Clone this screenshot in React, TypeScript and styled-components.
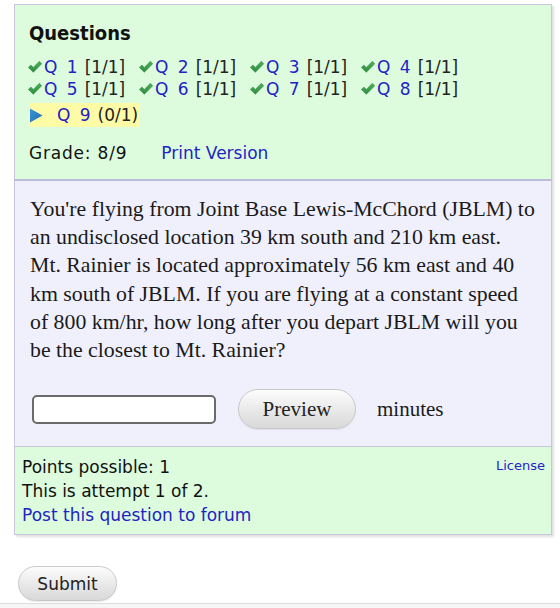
import React from "react";
import styled, { createGlobalStyle } from "styled-components";

const GlobalStyle = createGlobalStyle`
  html, body { margin: 0; padding: 0; background: #ffffff; }
  body { font-family: "DejaVu Sans", Verdana, sans-serif; color: #111; }
`;

const Page = styled.div`
  width: 560px;
  height: 608px;
  display: flex;
  flex-direction: column;
  overflow: hidden;
`;

const Frame = styled.div`
  margin: 4px 8px 0 14px;
  display: flex;
  flex-direction: column;
  box-shadow: 2px 2px 2px rgba(0, 0, 0, 0.12);
`;

const NavPanel = styled.div`
  background: #ddfcdd;
  border: 1px solid #c6c6de;
  border-bottom: 2px solid #bcbcd6;
  padding: 16px 14px 15px 14px;
`;

const Heading = styled.h3`
  margin: 0 0 11px 0;
  font-family: "DejaVu Sans Condensed", "DejaVu Sans", Verdana, sans-serif;
  font-stretch: condensed;
  font-size: 20px;
  line-height: 24px;
  font-weight: bold;
  color: #111;
`;

const QuestionGrid = styled.div`
  display: flex;
  flex-direction: column;
`;

const QuestionRow = styled.div`
  display: flex;
  align-items: center;
  height: 22px;
  font-size: 17px;
`;

const QuestionItem = styled.span<{ $current?: boolean }>`
  display: inline-flex;
  align-items: center;
  width: 111px;
  white-space: nowrap;
  ${(p) =>
    p.$current &&
    `
    width: auto;
    background: #fdfba6;
    height: 24px;
    padding-right: 2px;
    margin-top: 8px;
  `}
`;

const Mark = styled.span<{ $wide?: boolean }>`
  display: inline-flex;
  width: ${(p) => (p.$wide ? "28px" : "16px")};
  margin-left: ${(p) => (p.$wide ? "0" : "-1px")};
`;

const QLink = styled.a`
  color: #2323c4;
  text-decoration: none;
  word-spacing: 4px;
  margin-right: 7px;
`;

const Score = styled.span`
  color: #222;
`;

const GradeLine = styled.div`
  display: flex;
  align-items: center;
  gap: 34px;
  margin-top: 20px;
  font-size: 17px;
  line-height: 22px;
`;

const GradeText = styled.span`
  letter-spacing: 0.8px;
`;

const PlainLink = styled.a`
  color: #2323c4;
  text-decoration: none;
`;

const QuestionBody = styled.div`
  background: #f0f0fd;
  border-left: 1px solid #c6c6de;
  border-right: 1px solid #c6c6de;
  padding: 14px 8px 17px 15px;
`;

const Prompt = styled.p`
  margin: 0;
  font-family: "Liberation Serif", "Times New Roman", serif;
  font-size: 21.8px;
  line-height: 28.2px;
  color: #1a1a1a;
  white-space: nowrap;
`;

const PromptLine = styled.span`
  display: block;
`;

const AnswerRow = styled.div`
  display: flex;
  align-items: center;
  margin-top: 25px;
`;

const AnswerInput = styled.input`
  box-sizing: border-box;
  width: 184px;
  height: 29px;
  margin: 0 22px 0 2px;
  border: 2px solid #6a6a6a;
  border-radius: 5px;
  background: #fff;
  outline: none;
`;

const PillButton = styled.button<{ $serif?: boolean }>`
  box-sizing: border-box;
  border: 1px solid #c9c9c9;
  border-radius: 20px;
  background: linear-gradient(#fdfdfd, #e6e6e6 60%, #d9d9d9);
  box-shadow: 0 1px 1px rgba(0, 0, 0, 0.08);
  color: #222;
  cursor: pointer;
  font-family: ${(p) =>
    p.$serif
      ? `"Liberation Serif", "Times New Roman", serif`
      : `"DejaVu Sans", Verdana, sans-serif`};
`;

const PreviewButton = styled(PillButton)`
  width: 118px;
  height: 40px;
  font-size: 21px;
`;

const Units = styled.span`
  margin-left: 21px;
  font-family: "Liberation Serif", "Times New Roman", serif;
  font-size: 21px;
  color: #1a1a1a;
`;

const InfoPanel = styled.div`
  position: relative;
  background: #ddfcdd;
  border: 1px solid #c6c6de;
  padding: 8px 7px 7px 7px;
  font-size: 17px;
  line-height: 24px;
`;

const InfoLine = styled.div`
  color: #111;
`;

const LicenseLink = styled.a`
  position: absolute;
  top: 7px;
  right: 6px;
  font-size: 13px;
  color: #2323c4;
  text-decoration: none;
`;

const SubmitArea = styled.div`
  padding: 31px 0 0 18px;
  flex: 1;
`;

const SubmitButton = styled(PillButton)`
  width: 99px;
  height: 35px;
  font-size: 17px;
`;

const BottomBar = styled.div`
  height: 4px;
  border-top: 1px solid #dcdcdc;
  background: #f6f6f6;
`;

const CheckIcon = () => (
  <svg width="14" height="12" viewBox="0 0 15 13" aria-hidden="true">
    <defs>
      <linearGradient id="chk" x1="0" y1="0" x2="0" y2="1">
        <stop offset="0" stopColor="#4db05d" />
        <stop offset="1" stopColor="#2e8a3e" />
      </linearGradient>
    </defs>
    <path
      d="M0.3 7 L3.1 4.4 L5.7 7 L12.2 0.3 L14.8 2.9 L5.7 12.3 Z"
      fill="url(#chk)"
      stroke="#2f8a3f"
      strokeWidth="0.6"
      strokeLinejoin="round"
    />
  </svg>
);

const CurrentIcon = () => (
  <svg width="14" height="15" viewBox="0 0 14 15" aria-hidden="true">
    <defs>
      <linearGradient id="cur" x1="0" y1="0" x2="1" y2="1">
        <stop offset="0" stopColor="#3b96d6" />
        <stop offset="1" stopColor="#1f6fae" />
      </linearGradient>
    </defs>
    <path d="M1 0.5 L13.5 7.5 L1 14.5 Z" fill="url(#cur)" />
  </svg>
);

type Q = { n: number; score: string };

const rows: Q[][] = [
  [
    { n: 1, score: "[1/1]" },
    { n: 2, score: "[1/1]" },
    { n: 3, score: "[1/1]" },
    { n: 4, score: "[1/1]" },
  ],
  [
    { n: 5, score: "[1/1]" },
    { n: 6, score: "[1/1]" },
    { n: 7, score: "[1/1]" },
    { n: 8, score: "[1/1]" },
  ],
];

const promptLines = [
  "You're flying from Joint Base Lewis-McChord (JBLM) to",
  "an undisclosed location 39 km south and 210 km east.",
  "Mt. Rainier is located approximately 56 km east and 40",
  "km south of JBLM. If you are flying at a constant speed",
  "of 800 km/hr, how long after you depart JBLM will you",
  "be the closest to Mt. Rainier?",
];

export default function App() {
  return (
    <Page>
      <GlobalStyle />
      <Frame>
        <NavPanel>
          <Heading>Questions</Heading>
          <QuestionGrid>
            {rows.map((row, i) => (
              <QuestionRow key={i}>
                {row.map((q) => (
                  <QuestionItem key={q.n}>
                    <Mark>
                      <CheckIcon />
                    </Mark>
                    <QLink href="#">Q {q.n}</QLink>
                    <Score>{q.score}</Score>
                  </QuestionItem>
                ))}
              </QuestionRow>
            ))}
            <QuestionRow>
              <QuestionItem $current>
                <Mark $wide>
                  <CurrentIcon />
                </Mark>
                <QLink href="#">Q 9</QLink>
                <Score>(0/1)</Score>
              </QuestionItem>
            </QuestionRow>
          </QuestionGrid>
          <GradeLine>
            <GradeText>Grade: 8/9</GradeText>
            <PlainLink href="#">Print Version</PlainLink>
          </GradeLine>
        </NavPanel>
        <QuestionBody>
          <Prompt>
            {promptLines.map((line) => (
              <PromptLine key={line}>{line}</PromptLine>
            ))}
          </Prompt>
          <AnswerRow>
            <AnswerInput type="text" aria-label="answer" />
            <PreviewButton $serif>Preview</PreviewButton>
            <Units>minutes</Units>
          </AnswerRow>
        </QuestionBody>
        <InfoPanel>
          <LicenseLink href="#">License</LicenseLink>
          <InfoLine>Points possible: 1</InfoLine>
          <InfoLine>This is attempt 1 of 2.</InfoLine>
          <PlainLink href="#">Post this question to forum</PlainLink>
        </InfoPanel>
      </Frame>
      <SubmitArea>
        <SubmitButton>Submit</SubmitButton>
      </SubmitArea>
      <BottomBar />
    </Page>
  );
}
